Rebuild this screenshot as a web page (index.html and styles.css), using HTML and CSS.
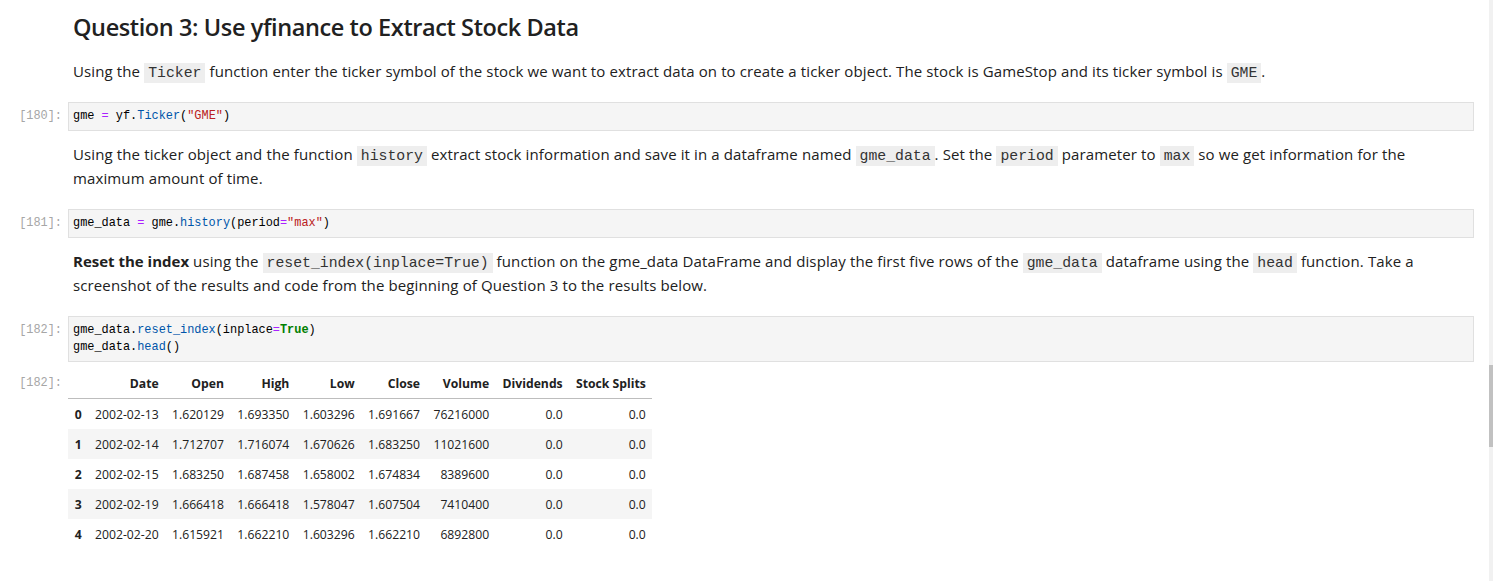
FILE: index.html
```html
<!DOCTYPE html>
<html>
<head>
<meta charset="utf-8">
<link rel="stylesheet" href="styles.css">
</head>
<body>
<div class="page">
  <div class="notebook">
    <div class="cell md first">
      <div class="prompt"></div>
      <div class="content"><h2 class="title">Question 3: Use yfinance to Extract Stock Data</h2></div>
    </div>
    <div class="cell md p1">
      <div class="prompt"></div>
      <div class="content"><p>Using the <code>Ticker</code> function enter the ticker symbol of the stock we want to extract data on to create a ticker object. The stock is GameStop and its ticker symbol is <code>GME</code>.</p></div>
    </div>
    <div class="cell code">
      <div class="prompt">[180]:</div>
      <div class="codebox"><pre>gme <span class="op">=</span> yf<span class="op2">.</span><span class="prop">Ticker</span>(<span class="str">"GME"</span>)</pre></div>
    </div>
    <div class="cell md">
      <div class="prompt"></div>
      <div class="content"><p>Using the ticker object and the function <code>history</code> extract stock information and save it in a dataframe named <code>gme_data</code>. Set the <code>period</code> parameter to <code>max</code> so we get information for the maximum amount of time.</p></div>
    </div>
    <div class="cell code">
      <div class="prompt">[181]:</div>
      <div class="codebox"><pre>gme_data <span class="op">=</span> gme<span class="op2">.</span><span class="prop">history</span>(period<span class="op">=</span><span class="str">"max"</span>)</pre></div>
    </div>
    <div class="cell md">
      <div class="prompt"></div>
      <div class="content"><p><b>Reset the index</b> using the <code>reset_index(inplace=True)</code> function on the gme_data DataFrame and display the first five rows of the <code>gme_data</code> dataframe using the <code>head</code> function. Take a screenshot of the results and code from the beginning of Question 3 to the results below.</p></div>
    </div>
    <div class="cell code">
      <div class="prompt">[182]:</div>
      <div class="codebox"><pre>gme_data<span class="op2">.</span><span class="prop">reset_index</span>(inplace<span class="op">=</span><span class="kw">True</span>)
gme_data<span class="op2">.</span><span class="prop">head</span>()</pre></div>
    </div>
    <div class="cell output">
      <div class="prompt">[182]:</div>
      <div class="outarea">
        <table class="df">
          <thead>
            <tr><th></th><th>Date</th><th>Open</th><th>High</th><th>Low</th><th>Close</th><th>Volume</th><th>Dividends</th><th>Stock Splits</th></tr>
          </thead>
          <tbody>
            <tr><th>0</th><td>2002-02-13</td><td>1.620129</td><td>1.693350</td><td>1.603296</td><td>1.691667</td><td>76216000</td><td>0.0</td><td>0.0</td></tr>
            <tr><th>1</th><td>2002-02-14</td><td>1.712707</td><td>1.716074</td><td>1.670626</td><td>1.683250</td><td>11021600</td><td>0.0</td><td>0.0</td></tr>
            <tr><th>2</th><td>2002-02-15</td><td>1.683250</td><td>1.687458</td><td>1.658002</td><td>1.674834</td><td>8389600</td><td>0.0</td><td>0.0</td></tr>
            <tr><th>3</th><td>2002-02-19</td><td>1.666418</td><td>1.666418</td><td>1.578047</td><td>1.607504</td><td>7410400</td><td>0.0</td><td>0.0</td></tr>
            <tr><th>4</th><td>2002-02-20</td><td>1.615921</td><td>1.662210</td><td>1.603296</td><td>1.662210</td><td>6892800</td><td>0.0</td><td>0.0</td></tr>
          </tbody>
        </table>
      </div>
    </div>
  </div>
  <div class="scrollbar"><div class="thumb"></div></div>
</div>
</body>
</html>
```
FILE: styles.css
```css
html, body {
  margin: 0;
  padding: 0;
  background: #ffffff;
}
body {
  font-family: "Open Sans", sans-serif;
  color: #212121;
  overflow: hidden;
}
.page {
  display: flex;
  height: 581px;
}
.notebook {
  flex: 1;
  padding-right: 15px;
}
.scrollbar {
  width: 4px;
  background: #f1f1f1;
  display: flex;
  flex-direction: column;
}
.thumb {
  margin-top: 365px;
  height: 82px;
  background: #c1c1c1;
}
.cell {
  display: grid;
  grid-template-columns: 68px 1fr;
}
.prompt {
  font-family: "Liberation Mono", monospace;
  font-size: 11.9px;
  color: #a6a6a6;
  text-align: right;
  padding-right: 6px;
  line-height: 17px;
}
.content {
  padding-left: 5px;
}
.title {
  margin: 0;
  padding-top: 12px;
  font-size: 23.5px;
  line-height: 30px;
  font-weight: 600;
  font-family: "Open Sans", sans-serif;
  letter-spacing: -0.4px;
  color: #212121;
}
p {
  margin: 0;
  font-size: 15px;
  line-height: 24px;
  font-family: "Open Sans", sans-serif;
  letter-spacing: 0.12px;
  padding-right: 20px;
}
p b { font-weight: 700; letter-spacing: 0; }
.md { padding-top: 11px; padding-bottom: 19px; }
.md.first { padding-top: 0; padding-bottom: 0; }
.md.p1 { padding-top: 17px; padding-bottom: 19px; }
p code {
  font-family: "Liberation Mono", monospace;
  font-size: 14.8px;
  line-height: 1;
  letter-spacing: 0;
  background: #eeeeee;
  padding: 2px 4px;
  color: #333;
}
.code .prompt {
  padding-top: 6px;
}
.codebox {
  background: #f5f5f5;
  border: 1px solid #e0e0e0;
  padding: 5px 4px;
}
pre {
  margin: 0;
  font-family: "Liberation Mono", monospace;
  font-size: 11.9px;
  line-height: 17px;
  color: #000;
}
.op { color: #aa22ff; }
.op2 { color: #000; }
.prop { color: #0055aa; }
.str { color: #ba2121; }
.kw { color: #008000; font-weight: bold; }
.output {
  padding-top: 6px;
}
.output .prompt {
  padding-top: 7px;
}
.df {
  border-collapse: collapse;
  font-family: "Open Sans", sans-serif;
  font-size: 12.2px;
  color: #212121;
}
.df th, .df td {
  text-align: right;
  padding: 0 6.7px;
  height: 30px;
  white-space: nowrap;
}
.df thead th {
  font-weight: 700;
  border-bottom: 1px solid #bdbdbd;
  height: 30px;
  vertical-align: middle;
}
.df tbody th {
  font-weight: 700;
}
.df tbody tr:nth-child(odd) { background: #ffffff; }
.df tbody tr:nth-child(even) { background: #f5f5f5; }
```
